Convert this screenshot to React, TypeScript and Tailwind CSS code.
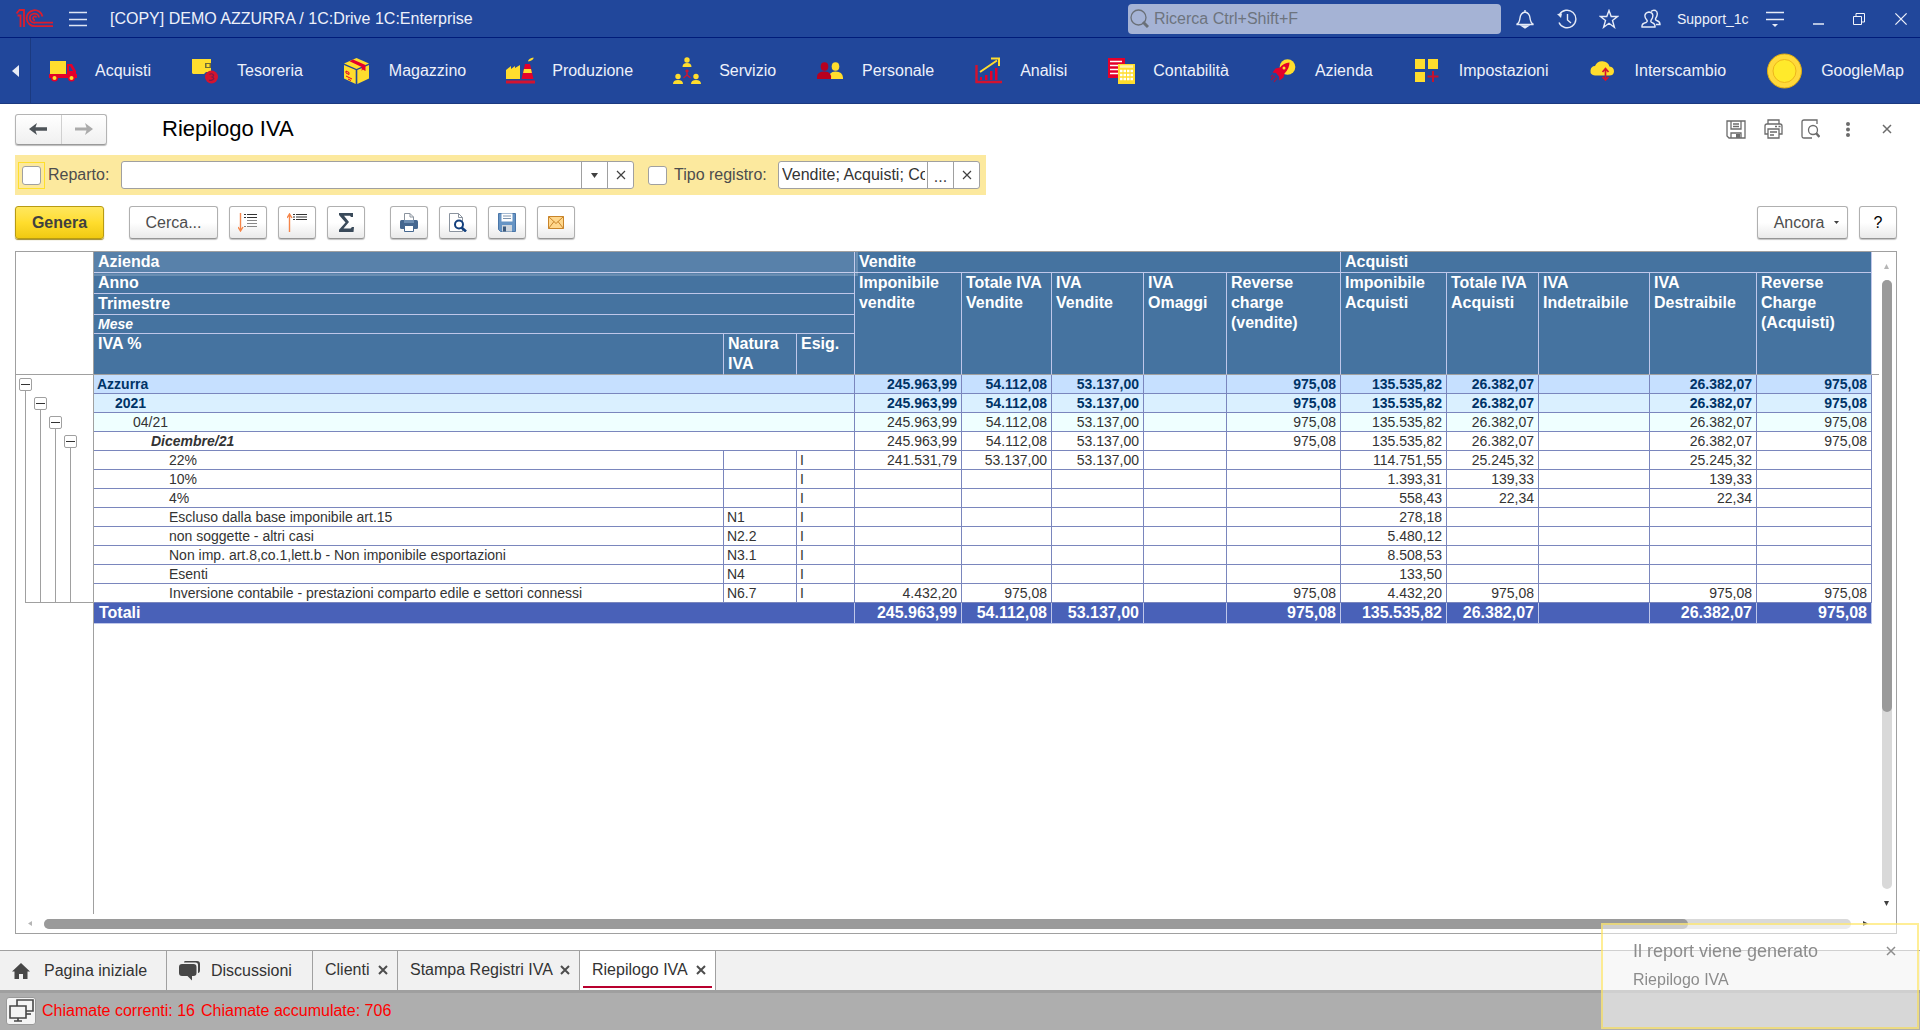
import type { ReactNode } from "react";
import clsx from "clsx";

/* ---------- section icons ---------- */

function TruckIcon() {
  return (
    <svg width="28" height="22" viewBox="0 0 28 22">
      <rect x="1" y="1" width="16" height="13" fill="#ffdd2d" />
      <path d="M0 14h28v4H0z" fill="#e4002b" />
      <path d="M18 4h5l4 7v4h-9z" fill="#e4002b" />
      <path d="M20 6h1l3 5h-4z" fill="#21479b" />
      <circle cx="5.5" cy="18" r="3.5" fill="#e4002b" />
      <circle cx="22.5" cy="18" r="3.5" fill="#e4002b" />
      <circle cx="5.5" cy="18" r="2" fill="#ffdd2d" />
      <circle cx="22.5" cy="18" r="2" fill="#ffdd2d" />
    </svg>
  );
}

function WalletIcon() {
  return (
    <svg width="28" height="26" viewBox="0 0 28 26">
      <path d="M1 1h19v13h-5l-2 2H2l-1-1z" fill="#ffdd2d" />
      <rect x="14" y="5" width="6" height="5" fill="#6d6a3a" />
      <rect x="15.5" y="6" width="3" height="3" fill="#ffdd2d" />
      <circle cx="20.5" cy="19" r="6.5" fill="#d3132f" />
      <path d="M18.5 16.5q2-1.500 3.500 0t-1 2.500q3 1 1 2.500t-3.800.4" stroke="#7c1a4a" strokeWidth="1.2" fill="none" />
    </svg>
  );
}

function BoxIcon() {
  return (
    <svg width="25" height="26" viewBox="0 0 25 26">
      <path d="M12.5 0 25 5.5 12.5 11 0 5.5z" fill="#ffdd2d" />
      <path d="M0 7l11.700 5v14L0 20.500z" fill="#ffdd2d" />
      <path d="M25 7l-11.700 5v14L25 20.500z" fill="#ffdd2d" />
      <path d="M5.5 3.200 9 1.600 21.500 7v6l-2.800-1.500-1 1.500V9z" fill="#e4002b" />
      <path d="M2 13l3 1.500v2L2 15zM2 18l6 3M4 21l3 1.500" stroke="#e4002b" fill="none" />
    </svg>
  );
}

function FactoryIcon() {
  return (
    <svg width="29" height="28" viewBox="0 0 29 28">
      <path d="M0 13l5-4v3l4-3v2l5-3v14H0z" fill="#ffdd2d" />
      <path d="M19 7h5l3.500 15h-12z" fill="#e4002b" />
      <path d="M18 12h7l.9 4H17.100z" fill="#ffdd2d" />
      <path d="M22 4q1-3 5.500-3.500Q28 3 22.500 4.500z" fill="#ffdd2d" />
      <path d="M0 23.500h29v3H0z" fill="#d3132f" />
    </svg>
  );
}

function ServiceIcon() {
  return (
    <svg width="28" height="28" viewBox="0 0 28 28">
      <g fill="#ffdd2d">
        <circle cx="14" cy="3" r="2.7" />
        <path d="M9.500 10q0-4 4.500-4t4.500 4z" />
        <circle cx="5" cy="19.5" r="2.7" />
        <path d="M0 27q0-4 5-4t5 4z" />
        <circle cx="23" cy="19.5" r="2.7" />
        <path d="M18 27q0-4 5-4t5 4z" />
      </g>
      <path d="M14 13v5l-3.500 3M14 18l3.500 3M12.500 14.500 14 13l1.500 1.500" stroke="#d3132f" strokeWidth="1.4" fill="none" />
    </svg>
  );
}

function StaffIcon() {
  return (
    <svg width="26" height="18" viewBox="0 0 26 18">
      <g fill="#ffdd2d">
        <ellipse cx="18.5" cy="4.5" rx="3.8" ry="4.3" />
        <path d="M12 17q-.5-7.500 6.500-7.500T26 15.500V17z" />
      </g>
      <g fill="#b8001f">
        <ellipse cx="7.5" cy="4.5" rx="3.8" ry="4.3" />
        <path d="M0 17v-2q0-5.500 7.500-5.500T14 17z" />
      </g>
    </svg>
  );
}

function ChartIcon() {
  return (
    <svg width="27" height="27" viewBox="0 0 27 27">
      <path d="M1.500 8v17H27" stroke="#d3132f" strokeWidth="2.4" fill="none" />
      <path d="M5 20h2v3H5zM10 18h2.500v5H10zM15 14h2.500v9H15zM20 11h2.500v12H20z" fill="#e4002b" />
      <path d="M5 15 22 3.500M16 1.500h8V9" stroke="#ffdd2d" strokeWidth="2" fill="none" />
    </svg>
  );
}

function LedgerIcon() {
  return (
    <svg width="27" height="26" viewBox="0 0 27 26">
      <path d="M0 0h17v20H0z" fill="#e4002b" />
      <path d="M2 3.500h12M2 7.500h12M2 11.500h9M2 15.500h9" stroke="#fff" strokeWidth="1.6" />
      <path d="M10 6h17v20H10z" fill="#ffdd2d" />
      <path d="M12 8.500h13" stroke="#fff3a8" strokeWidth="2.5" />
      <path d="M12 13h13M12 17h13M12 21h13" stroke="#fff" strokeWidth="2.5" strokeDasharray="2.5 1" />
    </svg>
  );
}

function RocketIcon() {
  return (
    <svg width="26" height="24" viewBox="0 0 26 24">
      <circle cx="17.5" cy="8" r="7.8" fill="#ffdd2d" />
      <path d="M19.500 3.500q-6 .5-9.500 5L5.500 9.500l-3 4 3.500.5 3 3.500.5 4 4-3 1-4q5-5 5-11z" fill="#e4002b" />
      <circle cx="14" cy="9" r="1.5" fill="#ffdd2d" />
      <path d="M5 17l-4 4M7 19l-3 4M3 16l-2 2" stroke="#a8123f" strokeWidth="1.2" />
    </svg>
  );
}

function TilesIcon() {
  return (
    <svg width="25" height="25" viewBox="0 0 25 25">
      <path d="M1 1h10v10H1zM14 1h10v10H14zM1 14h10v10H1z" fill="#ffdd2d" />
      <path d="M19 13v11M13.500 18.500h11" stroke="#c5122f" strokeWidth="2" />
    </svg>
  );
}

function CloudIcon() {
  return (
    <svg width="25" height="20" viewBox="0 0 25 20">
      <path d="M5 14.500Q0 14 .5 9.500T5 5Q7 0 12.500.3t7 5.200q4.500.5 4.500 4.800t-5 4.200z" fill="#ffdd2d" />
      <path d="M15.500 8v11M12.500 11l3-3.500 3 3.500M12.500 16l3 3 3-3" stroke="#d3132f" strokeWidth="1.7" fill="none" />
    </svg>
  );
}

function CoinIcon() {
  return (
    <svg width="57" height="36" viewBox="0 0 57 36">
      <circle cx="28.5" cy="18" r="17" fill="#ffd93b" stroke="#dfac12" />
      <circle cx="28.5" cy="18" r="11.5" fill="#ffea2b" stroke="#eeb51c" />
    </svg>
  );
}

const sections: { name: string; icon: ReactNode }[] = [
  { name: "Acquisti", icon: <TruckIcon /> },
  { name: "Tesoreria", icon: <WalletIcon /> },
  { name: "Magazzino", icon: <BoxIcon /> },
  { name: "Produzione", icon: <FactoryIcon /> },
  { name: "Servizio", icon: <ServiceIcon /> },
  { name: "Personale", icon: <StaffIcon /> },
  { name: "Analisi", icon: <ChartIcon /> },
  { name: "Contabilità", icon: <LedgerIcon /> },
  { name: "Azienda", icon: <RocketIcon /> },
  { name: "Impostazioni", icon: <TilesIcon /> },
  { name: "Interscambio", icon: <CloudIcon /> },
  { name: "GoogleMap", icon: <CoinIcon /> },
];

/* ---------- small icons ---------- */

function Cross({ size = 10, width = 1.5 }: { size?: number; width?: number }) {
  return (
    <svg width={size} height={size} viewBox="0 0 10 10" fill="none" stroke="currentColor" strokeWidth={width}>
      <path d="M1 1l8 8M9 1L1 9" />
    </svg>
  );
}

function Logo() {
  return (
    <svg width="37" height="19" viewBox="0 0 37 19" fill="none" stroke="#dd1c2c" strokeWidth="1.8">
      <path d="M.5 4.500 3.500 1H8v17M1.500 6.500h3V18" />
      <path d="M26.500 7.500A8 8 0 1 0 19 17.200h18M23 8.500A4.600 4.600 0 1 0 19 13.700h18" />
      <path d="M20.500 8.500A1.800 1.800 0 1 0 19 11" />
    </svg>
  );
}

function HeaderIcon({ children, label }: { children: ReactNode; label: string }) {
  return (
    <button aria-label={label} className="flex h-9 w-[42px] items-center justify-center">
      <svg width="20" height="20" viewBox="0 0 20 20" fill="none" stroke="#e6ebf7" strokeWidth="1.4">
        {children}
      </svg>
    </button>
  );
}

function TitleBar() {
  return (
    <header className="flex h-[38px] items-center border-b border-[#001c7a] text-base text-[#eef1fa]">
      <div className="pl-4">
        <Logo />
      </div>
      <button aria-label="Menu" className="ml-4">
        <svg width="18" height="16" viewBox="0 0 18 16" stroke="#dfe5f4" strokeWidth="1.3">
          <path d="M0 1.500h18M0 8.500h18M0 14.500h18" />
        </svg>
      </button>
      <h1 className="ml-[23px] flex-1 whitespace-nowrap">[COPY] DEMO AZZURRA / 1C:Drive 1C:Enterprise</h1>

      <label className="flex h-[30px] w-[373px] items-center rounded-sm bg-[#a5b3d5] pl-0.5">
        <svg width="19" height="19" viewBox="0 0 19 19" fill="none" stroke="#6a7078">
          <circle cx="8.5" cy="8.5" r="7.5" strokeWidth="1.3" />
          <path d="M13 13l5 5" strokeWidth="3" />
        </svg>
        <input
          aria-label="Ricerca"
          placeholder="Ricerca Ctrl+Shift+F"
          className="ml-1 min-w-0 flex-1 bg-transparent pl-px outline-none placeholder:text-[#6d747e]"
        />
      </label>

      <div className="ml-[3px] flex items-center">
        <HeaderIcon label="Notifiche">
          <path d="M1.500 15.500h17q-3-1.500-3.500-6.500T10 3Q5.500 4 5 9t-3.500 6.500zM10 1v2" />
          <path d="M7 17h6l-3 2z" fill="#e6ebf7" />
        </HeaderIcon>
        <HeaderIcon label="Cronologia">
          <path d="M2.500 5.500A8.800 8.800 0 1 1 2 13.500M10.500 5v6l3.500 3" />
          <path d="M0 5l5-.5L4 9z" fill="#e6ebf7" stroke="none" />
        </HeaderIcon>
        <HeaderIcon label="Preferiti">
          <path d="M10 1.500l2.200 6h6.300l-5 4 1.900 6.800L10 14.300l-5.400 4 1.900-6.800-5-4h6.300z" />
        </HeaderIcon>
        <HeaderIcon label="Utente">
          <path d="M1 18q-.5-3.500 4-4.500 2-1 .8-2.500Q3.500 8.500 4 6t4-3q3.500.5 3.800 3t-1.600 5q-1 2 1 2.600Q14.500 15 14 18z" />
          <path d="M10 2.500Q12 .5 14.500 1.500 17 3 16 6.500q-.3 1.500-1.300 2.800-.7 1.500 1 2.200Q19 12.500 19 15.500h-4" />
        </HeaderIcon>
      </div>
      <button className="ml-[5px] w-[73px] text-left text-sm whitespace-nowrap">Support_1c</button>
      <button aria-label="Impostazioni vista" className="ml-4">
        <svg width="18" height="18" viewBox="0 0 18 18" stroke="#e6ebf7">
          <path d="M0 2.500h18M0 9.500h18" strokeWidth="1.3" />
          <path d="M6 14h6l-3 3z" fill="#e6ebf7" stroke="none" />
        </svg>
      </button>
      <div className="flex items-center gap-[29px] pr-3 pl-[29px]">
        <button aria-label="Riduci" className="pt-2.5">
          <svg width="11" height="2">
            <path d="M0 1h11" stroke="#e6ebf7" strokeWidth="1.5" />
          </svg>
        </button>
        <button aria-label="Ripristina">
          <svg width="12" height="12" viewBox="0 0 12 12" fill="none" stroke="#f2f4fb">
            <path d="M.5 3.500h8v8h-8zM3 3.500v-3h8.500V9H8.500" />
          </svg>
        </button>
        <button aria-label="Chiudi">
          <Cross size={14} width={0.9} />
        </button>
      </div>
    </header>
  );
}

function SectionBar() {
  return (
    <nav className="flex h-[66px] items-stretch overflow-hidden border-b border-[#1b3a80] text-base whitespace-nowrap text-[#eef1fa]">
      <button aria-label="Scorri" className="flex w-[31px] shrink-0 items-center justify-center border-r border-[#1b3a80]">
        <svg width="7" height="12">
          <path d="M7 0v12L0 6z" fill="#e8ecf6" />
        </svg>
      </button>
      <ul className="flex items-center gap-[30px] pl-2">
        {sections.map((s) => (
          <li key={s.name}>
            <a href="#" className="flex items-center gap-2">
              <span className="flex min-w-12 justify-center">{s.icon}</span>
              {s.name}
            </a>
          </li>
        ))}
      </ul>
    </nav>
  );
}

function FormHeader() {
  return (
    <div className="flex h-[30px] items-center pr-[5px]">
      <div className="flex h-[31px] w-[92px] rounded-[3px] border border-[#b4b4b4] border-b-[#9a9a9a] bg-linear-to-b from-white to-[#f0f0f0] shadow-[0_1px_1px_#bbb]">
        <button aria-label="Indietro" className="flex flex-1 items-center justify-center border-r border-[#d0d0d0] text-[#4d5358]">
          <svg width="18" height="12" viewBox="0 0 18 12" fill="currentColor">
            <path d="M0 6l8-6-1.500 4.300H18v3.400H6.500L8 12z" />
          </svg>
        </button>
        <button aria-label="Avanti" className="flex flex-1 items-center justify-center text-[#ababab]">
          <svg width="18" height="12" viewBox="0 0 18 12" fill="currentColor">
            <path d="M18 6l-8-6 1.500 4.500H0v3h11.500L10 12z" />
          </svg>
        </button>
      </div>
      <h2 className="ml-[55px] flex-1 text-[22px] leading-7 text-black">Riepilogo IVA</h2>

      <div className="flex items-center text-[#6b6b6b]">
        <button aria-label="Salva" className="mr-[18px]">
          <svg width="20" height="19" viewBox="0 0 20 19" fill="none" stroke="currentColor" strokeWidth="1.3">
            <path d="M1 1h18v17H3l-2-2z" />
            <path d="M5 1v8h10V1M7 4h6M7 6.500h6M5 18v-5h10v5" />
            <path d="M10 14h4v4h-4z" fill="currentColor" stroke="none" />
          </svg>
        </button>
        <button aria-label="Stampa" className="mr-[18px]">
          <svg width="19" height="20" viewBox="0 0 19 20" fill="none" stroke="currentColor" strokeWidth="1.3">
            <path d="M4 5V1h11v4M4 15H1V7q0-2 2-2h13q2 0 2 2v8h-3" />
            <path d="M4 10h11v9H4zM6 13h7M6 16h4M11 7.500h2M14.500 7.500h2" />
          </svg>
        </button>
        <button aria-label="Anteprima" className="mr-[26px]">
          <svg width="19" height="20" viewBox="0 0 19 20" fill="none" stroke="currentColor" strokeWidth="1.3">
            <path d="M11 19H3q-2 0-2-2V3q0-2 2-2h13v4" />
            <circle cx="12" cy="11" r="4.5" />
            <path d="M15 14l3.500 4" strokeWidth="2.5" />
          </svg>
        </button>
        <button aria-label="Altre azioni" className="mr-8">
          <svg width="4" height="15" viewBox="0 0 4 15" fill="currentColor">
            <circle cx="2" cy="2" r="2" />
            <circle cx="2" cy="7.5" r="2" />
            <circle cx="2" cy="13" r="2" />
          </svg>
        </button>
        <button aria-label="Chiudi modulo">
          <Cross />
        </button>
      </div>
    </div>
  );
}

const checkbox = "block h-[19px] w-[19px] appearance-none rounded-[3px] border border-[#a0a0a0] bg-white checked:bg-[#ffdf2c]";
const field = "flex h-7 items-stretch overflow-hidden rounded-[3px] border border-[#a0a0a0] bg-white text-[#404040]";
const fieldButton = "flex w-[26px] shrink-0 items-center justify-center border-l border-[#a0a0a0]";

function FilterBar() {
  return (
    <div className="mt-[11px] flex h-10 w-fit items-center bg-[#fce99e] pr-1.5 text-base text-[#4d4d4d]">
      <div className="ml-[3px] border border-[#ffdf2c] p-[3px]">
        <input id="reparto-on" type="checkbox" className={checkbox} />
      </div>
      <label htmlFor="reparto-on" className="ml-[3px] w-[73px]">
        Reparto:
      </label>
      <div className={field}>
        <input aria-label="Valore reparto" className="w-[459px] px-1 outline-none" />
        <button aria-label="Scegli reparto" className={fieldButton}>
          <svg width="7" height="5">
            <path d="M0 0h7L3.500 5z" fill="#404040" />
          </svg>
        </button>
        <button aria-label="Cancella reparto" className={fieldButton}>
          <Cross width={1.2} />
        </button>
      </div>
      <input id="tipo-on" type="checkbox" className={clsx(checkbox, "ml-3.5")} />
      <label htmlFor="tipo-on" className="ml-[7px] w-[104px]">
        Tipo registro:
      </label>
      <div className={field}>
        <input
          aria-label="Valore tipo registro"
          defaultValue="Vendite; Acquisti; Corrispettivi"
          className="w-[148px] border-r-2 border-transparent pl-[3px] text-[#333] outline-none"
        />
        <button aria-label="Scegli tipo registro" className={clsx(fieldButton, "pt-1")}>
          ...
        </button>
        <button aria-label="Cancella tipo registro" className={fieldButton}>
          <Cross width={1.2} />
        </button>
      </div>
    </div>
  );
}

function ToolButton({ label, className, children }: { label?: string; className?: string; children: ReactNode }) {
  return (
    <button
      aria-label={label}
      className={clsx(
        "flex h-[33px] items-center justify-center rounded-[3px] border border-[#b0b0b0] border-b-[#959595] bg-linear-to-b from-white via-white to-[#eaeaea] shadow-[0_1px_1px_#c4c4c4]",
        className ?? "w-[38px]",
      )}
    >
      {children}
    </button>
  );
}

function Toolbar() {
  return (
    <div className="mt-[11px] flex items-center text-base text-[#4d4d4d]">
      <button className="h-[33px] w-[89px] rounded-[3px] border border-[#b89b13] bg-linear-to-b from-[#ffe75c] via-[#ffdd2d] to-[#f0c90f] font-bold text-[#404040] shadow-[0_1px_1px_#9f8a2a]">
        Genera
      </button>
      <ToolButton className="ml-[25px] w-[89px]">Cerca...</ToolButton>
      <div className="ml-[11px] flex gap-[11px]">
        <ToolButton label="Espandi gruppi">
          <svg width="20" height="19" viewBox="0 0 20 19" fill="none">
            <path d="M2.500 0v17M0 14l2.500 4L5 14" stroke="#f58549" strokeWidth="1.4" />
            <path d="M6 1.500h2M9 1.500h10M6 4.500h2M9 4.500h10" stroke="#333" strokeWidth="1.2" />
            <path d="M9 7.500h10M9 10.500h10M6 13.500h2M9 13.500h10" stroke="#888" strokeWidth="1.2" />
          </svg>
        </ToolButton>
        <ToolButton label="Comprimi gruppi">
          <svg width="20" height="19" viewBox="0 0 20 19" fill="none">
            <path d="M2.500 19V1.500M0 5l2.500-4L5 5" stroke="#f58549" strokeWidth="1.4" />
            <path d="M6 1.500h2M9 1.500h11M6 4h2M9 4h11M6 6.500h2M9 6.500h11" stroke="#333" />
          </svg>
        </ToolButton>
        <ToolButton label="Somma">
          <svg width="15" height="19" viewBox="0 0 15 19">
            <path d="M0 0h14v4h-2l-1-1.200H5L10 9l-5.500 6.500h7L13 14h2l-.5 5H0v-2.200L6.500 9.500 0 2z" fill="#3a4a5a" />
          </svg>
        </ToolButton>
      </div>
      <div className="ml-[25px] flex gap-[11px]">
        <ToolButton label="Stampa rapporto">
          <svg width="18" height="19" viewBox="0 0 18 19">
            <path d="M4.500 9V.5H10L13.500 4v5z" fill="#fff" stroke="#8a939e" />
            <path d="M10 .5V4h3.500" fill="none" stroke="#8a939e" />
            <rect y="7" width="18" height="9" rx="1.5" fill="#45678f" />
            <path d="M4 7h10v3H4z" fill="#6f8fb3" />
            <path d="M4.500 12.500h9v6h-9z" fill="#fff" stroke="#45678f" />
          </svg>
        </ToolButton>
        <ToolButton label="Anteprima di stampa">
          <svg width="18" height="19" viewBox="0 0 18 19" fill="none">
            <path d="M.5.500h9l4 4v14H.5z" fill="#fff" stroke="#8a939e" />
            <path d="M9.500.5v4h4" stroke="#8a939e" />
            <circle cx="10" cy="11.5" r="4" stroke="#123f7d" strokeWidth="2" />
            <path d="M12.500 14.500l4.500 4" stroke="#123f7d" strokeWidth="2.6" />
          </svg>
        </ToolButton>
        <ToolButton label="Salva rapporto">
          <svg width="18" height="19" viewBox="0 0 18 19">
            <path d="M.5.500h17v18h-15l-2-2z" fill="#6694c4" stroke="#4a76a8" />
            <path d="M3.500.5h11v8h-11z" fill="#fff" />
            <path d="M5 3h8M5 5.500h8" stroke="#7c93ad" />
            <path d="M4 12h10v6.500H4z" fill="#cfd6dd" />
            <path d="M5 13.500h3v5H5z" fill="#3d5a7c" />
          </svg>
        </ToolButton>
        <ToolButton label="Invia per email">
          <svg width="16" height="13" viewBox="0 0 16 13" fill="none" stroke="#c8842a">
            <path d="M.5.500h15v12H.5z" fill="#ffd78c" />
            <path d="M.5.500 8 7.500l7.500-7M.5 12.500l5.500-7M15.500 12.500l-5.500-7" />
          </svg>
        </ToolButton>
      </div>
      <div className="ml-auto flex gap-[11px]">
        <ToolButton className="w-[91px] gap-2.5 pl-2">
          Ancora
          <svg width="5" height="3">
            <path d="M0 0h5L2.500 3z" fill="#404040" />
          </svg>
        </ToolButton>
        <ToolButton label="Aiuto">
          <span className="text-black">?</span>
        </ToolButton>
      </div>
    </div>
  );
}

/* ---------- report ---------- */

const measureHeads = [
  "Imponibile\nvendite",
  "Totale IVA\nVendite",
  "IVA\nVendite",
  "IVA\nOmaggi",
  "Reverse\ncharge\n(vendite)",
  "Imponibile\nAcquisti",
  "Totale IVA\nAcquisti",
  "IVA\nIndetraibile",
  "IVA\nDestraibile",
  "Reverse\nCharge\n(Acquisti)",
];

const totals = ["245.963,99", "54.112,08", "53.137,00", "", "975,08", "135.535,82", "26.382,07", "", "26.382,07", "975,08"];

const groups = [
  { name: "Azzurra", row: "bg-[#c6e0ff] font-bold text-[#003366]", cell: "pl-[3px]" },
  { name: "2021", row: "bg-[#daf0ff] font-bold text-[#003366]", cell: "pl-[21px]" },
  { name: "04/21", row: "bg-[#efffff]", cell: "pl-[39px]" },
  { name: "Dicembre/21", row: "", cell: "pl-[57px] font-bold italic" },
];

const leaves = [
  { name: "22%", nature: "", values: ["241.531,79", "53.137,00", "53.137,00", "", "", "114.751,55", "25.245,32", "", "25.245,32", ""] },
  { name: "10%", nature: "", values: ["", "", "", "", "", "1.393,31", "139,33", "", "139,33", ""] },
  { name: "4%", nature: "", values: ["", "", "", "", "", "558,43", "22,34", "", "22,34", ""] },
  { name: "Escluso dalla base imponibile art.15", nature: "N1", values: ["", "", "", "", "", "278,18", "", "", "", ""] },
  { name: "non soggette - altri casi", nature: "N2.2", values: ["", "", "", "", "", "5.480,12", "", "", "", ""] },
  { name: "Non imp. art.8,co.1,lett.b - Non imponibile esportazioni", nature: "N3.1", values: ["", "", "", "", "", "8.508,53", "", "", "", ""] },
  { name: "Esenti", nature: "N4", values: ["", "", "", "", "", "133,50", "", "", "", ""] },
  {
    name: "Inversione contabile - prestazioni comparto edile e settori connessi",
    nature: "N6.7",
    values: ["4.432,20", "975,08", "", "", "975,08", "4.432,20", "975,08", "", "975,08", "975,08"],
  },
];

const th = "border-r border-b border-[#bfc7ea] p-0 pl-1 text-left align-top font-bold";
const thLast = "border-r border-b border-r-[#bfc7ea] border-b-[#a0a0a0] p-0 pl-1 text-left align-top font-bold";
const td = "border-r border-b border-[#7a86bd] p-0";
const tdTotal = "border-r border-b border-[#bfc7ea] p-0";

function ReportTable() {
  return (
    <table className="w-full table-fixed border-separate border-spacing-0 text-sm leading-[18px] whitespace-nowrap text-[#333]">
      <colgroup>
        <col />
        <col className="w-[73px]" />
        <col className="w-[58px]" />
        <col className="w-[107px]" />
        <col className="w-[90px]" />
        <col className="w-[92px]" />
        <col className="w-[83px]" />
        <col className="w-[114px]" />
        <col className="w-[106px]" />
        <col className="w-[92px]" />
        <col className="w-[111px]" />
        <col className="w-[107px]" />
        <col className="w-[115px]" />
      </colgroup>
      <thead className="bg-[#4573a0] text-base leading-5 text-white">
        <tr className="h-[21px]">
          <th colSpan={3} className={clsx(th, "relative")}>
            Azienda
            {/* current cell marker */}
            <span className="absolute inset-0 -right-1 -bottom-1 border-r-2 border-b-2 border-white/10 bg-white/10" />
          </th>
          <th colSpan={5} className={th}>Vendite</th>
          <th colSpan={5} className={th}>Acquisti</th>
        </tr>
        <tr className="h-[21px]">
          <th colSpan={3} className={th}>Anno</th>
          {measureHeads.map((head) => (
            <th key={head} rowSpan={4} className={clsx(thLast, "whitespace-pre-line")}>
              {head}
            </th>
          ))}
        </tr>
        <tr className="h-[21px]">
          <th colSpan={3} className={th}>Trimestre</th>
        </tr>
        <tr className="h-[19px]">
          <th colSpan={3} className={clsx(th, "text-sm leading-[18px] italic")}>Mese</th>
        </tr>
        <tr className="h-[41px]">
          <th className={thLast}>IVA %</th>
          <th className={clsx(thLast, "whitespace-normal")}>Natura IVA</th>
          <th className={thLast}>Esig.</th>
        </tr>
      </thead>
      <tbody>
        {groups.map((g) => (
          <tr key={g.name} className={clsx("h-[19px]", g.row)}>
            <td colSpan={3} className={clsx(td, g.cell)}>{g.name}</td>
            {totals.map((v, i) => (
              <td key={i} className={clsx(td, "pr-1 text-right")}>{v}</td>
            ))}
          </tr>
        ))}
        {leaves.map((l) => (
          <tr key={l.name} className="h-[19px]">
            <td className={clsx(td, "pl-[75px]")}>{l.name}</td>
            <td className={clsx(td, "pl-[3px]")}>{l.nature}</td>
            <td className={clsx(td, "pl-[3px]")}>I</td>
            {l.values.map((v, i) => (
              <td key={i} className={clsx(td, "pr-1 text-right")}>{v}</td>
            ))}
          </tr>
        ))}
      </tbody>
      <tfoot className="bg-[#4961b8] text-base leading-5 font-bold text-white">
        <tr className="h-[21px]">
          <td colSpan={3} className={clsx(tdTotal, "pl-[5px]")}>Totali</td>
          {totals.map((v, i) => (
            <td key={i} className={clsx(tdTotal, "pr-1 text-right")}>{v}</td>
          ))}
        </tr>
      </tfoot>
    </table>
  );
}

const outlineOffsets = ["pt-[3px]", "pt-[22px]", "pt-[41px]", "pt-[60px]"];

function OutlineGutter() {
  return (
    <div className="w-[78px] shrink-0 border-r border-[#a0a0a0]">
      <div className="h-[123px] border-b border-[#a0a0a0]" />
      <div className="flex h-[227px] gap-0.5 pl-[3px]">
        {outlineOffsets.map((offset) => (
          <div key={offset} className={clsx("flex w-[13px] flex-col items-center", offset)}>
            <button aria-label="Comprimi livello" className="flex h-[13px] w-[13px] shrink-0 items-center justify-center rounded-xs border border-[#a0a0a0]">
              <span className="h-px w-[9px] bg-[#333]" />
            </button>
            <span className="w-px flex-1 bg-[#a0a0a0]" />
          </div>
        ))}
      </div>
      <div className="ml-[9px] h-px bg-[#a0a0a0]" />
    </div>
  );
}

function ReportFrame() {
  return (
    <div className="mt-3 flex flex-1 flex-col border border-[#a0a0a0]">
      <div className="flex flex-1">
        <OutlineGutter />
        <div className="min-w-0 flex-1">
          {/* the frozen header's rule runs on past the last column */}
          <div className="flex">
            <div className="min-w-0 flex-1">
              <ReportTable />
            </div>
            <div className="h-[123px] w-[7px] border-b border-[#a0a0a0]" />
          </div>
        </div>
        <div className="flex w-[17px] flex-col items-center pt-3 pr-0.5">
          <svg width="5" height="5">
            <path d="M0 5h5L2.500 0z" fill="#b5b5b5" />
          </svg>
          <div className="mt-[11px] flex w-2.5 flex-1 flex-col rounded-full bg-[#d9d9d9]">
            <div className="h-[71%] rounded-full bg-[#9a9a9a]" />
          </div>
          <svg width="5" height="5" className="mt-3 mb-2">
            <path d="M0 0h5L2.500 5z" fill="#404040" />
          </svg>
        </div>
      </div>
      <div className="flex h-[19px] items-center pr-7 pl-3">
        <svg width="4" height="5" className="mr-3 shrink-0">
          <path d="M4 0v5L0 2.500z" fill="#b5b5b5" />
        </svg>
        <div className="flex h-2.5 flex-1 rounded-full bg-[#d9d9d9]">
          <div className="w-[91%] rounded-full bg-[#9a9a9a]" />
        </div>
        <svg width="5" height="5" className="ml-3 shrink-0">
          <path d="M0 0v5l5-2.500z" fill="#404040" />
        </svg>
      </div>
    </div>
  );
}

/* ---------- bottom ---------- */

function WindowTab({ name, active, className }: { name: string; active?: boolean; className: string }) {
  return (
    <div className={clsx("flex border-r border-[#a0a0a0] px-[3px] pb-0.5", active && "bg-white", className)}>
      <div className={clsx("flex flex-1 items-center justify-between border-b-2 pt-[3px] pr-1.5 pl-[9px]", active ? "border-[#b8002e]" : "border-transparent")}>
        <button>{name}</button>
        <button aria-label={`Chiudi ${name}`} className="text-[#4d4d4d]">
          <Cross width={2} />
        </button>
      </div>
    </div>
  );
}

function WindowTabs() {
  return (
    <div className="mt-4 flex h-10 items-stretch border-t border-[#a0a0a0] bg-[#f1f1f1] text-base whitespace-nowrap text-[#333]">
      <button className="flex w-[167px] items-center gap-3.5 border-r border-[#a0a0a0] pl-3">
        <svg width="18" height="16" viewBox="0 0 18 16" fill="#474747">
          <path d="M9 0l9 8.500h-2.500V16H11v-5H7v5H2.500V8.500H0z" />
        </svg>
        Pagina iniziale
      </button>
      <button className="flex w-[146px] items-center gap-[11px] border-r border-[#a0a0a0] pl-3">
        <svg width="21" height="20" viewBox="0 0 21 20" fill="#474747">
          <path d="M6 0h12q3 0 3 3v6q0 3-2 3V4q0-2.500-2.500-2.500H5Q5 0 6 0z" />
          <path d="M3 3h11.500q3 0 3 3v6q0 3-3 3H13v4.500L8.500 15H3q-3 0-3-3V6q0-3 3-3z" />
        </svg>
        Discussioni
      </button>
      <WindowTab name="Clienti" className="w-[85px]" />
      <WindowTab name="Stampa Registri IVA" className="w-[182px]" />
      <WindowTab name="Riepilogo IVA" active className="w-[136px]" />
    </div>
  );
}

function StatusBar() {
  return (
    <footer className="flex h-10 items-center gap-1.5 border-t-3 border-[#9f9f9f] bg-[#aeaeae] pb-0.5 pl-1.5 text-base text-[#f00]">
      <button aria-label="Prestazioni" className="flex h-7 w-[30px] items-center justify-center rounded-[3px] border border-[#999] bg-[#f4f4f4]">
        <svg width="25" height="23" viewBox="0 0 25 23" fill="#f4f4f4" stroke="#474747" strokeWidth="1.6">
          <path d="M8 1h16v11H8z" />
          <path d="M17 15h5" />
          <path d="M1 7h16v12H1z" />
          <path d="M9 19v3M5 22h8" />
        </svg>
      </button>
      <span>Chiamate correnti: 16</span>
      <span>Chiamate accumulate: 706</span>
    </footer>
  );
}

function Toast() {
  return (
    <div role="status" className="fixed right-px bottom-px h-[106px] w-[318px] border-2 border-[#ffdd2d]/50 bg-white/50 pt-[13px] pl-[30px] text-[#8c8c8c]">
      <div className="flex items-center justify-between pr-[21px]">
        <p className="text-lg leading-[26px]">Il report viene generato</p>
        <button aria-label="Chiudi notifica">
          <Cross />
        </button>
      </div>
      <p className="mt-1 text-base leading-6">Riepilogo IVA</p>
    </div>
  );
}

export default function App() {
  return (
    <div className="flex min-h-screen flex-col bg-white font-['Liberation_Sans',Arial,sans-serif]">
      <div className="bg-[#21479b]">
        <TitleBar />
        <SectionBar />
      </div>
      <main className="flex flex-1 flex-col px-[15px] pt-2.5 pr-[23px]">
        <FormHeader />
        <FilterBar />
        <Toolbar />
        <ReportFrame />
      </main>
      <WindowTabs />
      <StatusBar />
      <Toast />
    </div>
  );
}
